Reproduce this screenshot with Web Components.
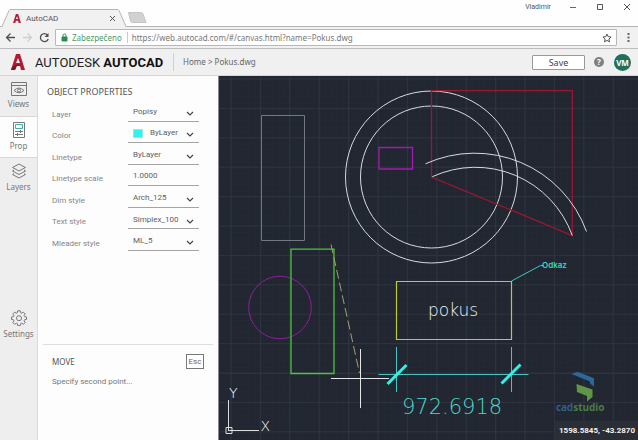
<!DOCTYPE html>
<html lang="en">
<head>
<meta charset="utf-8">
<title>AutoCAD</title>
<style>
html, body { margin: 0; height: 100%; }
body { font-family: "Roboto", "Noto Sans", sans-serif; font-size: 8px; color: #666; background: #fdfdfd; }
</style>
</head>
<body>
<cad-app></cad-app>

<script>
const define = (name, html, setup) => {
  const template = document.createElement('template');
  template.innerHTML = html;
  customElements.define(name, class extends HTMLElement {
    constructor() {
      super();
      this.attachShadow({ mode: 'open' }).append(template.content.cloneNode(true));
    }
    connectedCallback() { if (setup) setup(this, this.shadowRoot); }
  });
};

define('browser-tabs', `
<style>
:host { display: flex; align-items: flex-end; height: 26px; background: #fefefe; border-bottom: 1px solid #b4b4b4; }
button { font: inherit; border: 0; padding: 0; background: none; color: inherit; display: grid; place-items: center; }
svg { display: block; fill: none; }
.tab { display: flex; height: 18px; margin: 0 0 -1px 2px; flex: none; }
.body { box-sizing: border-box; width: 108px; border-top: 1px solid #b4b4b4; background: #f1f1f1; display: flex; align-items: center; gap: 5px; padding: 0 1px 0 3px; font-size: 8px; color: #555; }
.body span { flex: 1; }
.new { margin: 0 0 3px 1px; }
.window { margin: 0 6px 5px auto; display: flex; align-items: center; align-self: flex-start; height: 14px; }
.window span { font-size: 7px; color: #555; margin-right: 17px; }
.window button { width: 10px; height: 10px; margin-left: 17px; }
.window button:first-of-type { margin-left: 0; }
</style>
<div class="tab">
  <svg width="8" height="18"><path d="M0 18 7 1.500Q7.500.5 8 .5V18z" fill="#f1f1f1"/><path d="M0 17.500 7 1.500 8 .5" stroke="#b4b4b4"/></svg>
  <div class="body">
    <svg width="8" height="9" viewBox="0 0 14 16"><path d="M0 16 5 0h4l5 16h-4l-1-4H5l-1 4z" fill="#b01c34"/><path d="m5 9 2-5 2 5z" fill="#f1f1f1"/></svg>
    <span>AutoCAD</span>
    <button aria-label="Close tab"><svg width="9" height="9"><path d="m2 2 5 5m0-5L2 7" stroke="#555"/></svg></button>
  </div>
  <svg width="8" height="18"><path d="M8 18 1 1.500Q.5.5 0 .5V18z" fill="#f1f1f1"/><path d="M8 17.500 1 1.500 0 .5" stroke="#b4b4b4"/></svg>
</div>
<button class="new" aria-label="New tab"><svg width="20" height="11"><path d="M1.500.5h12q2 0 2.500 1.500l3 8.500H6q-2 0-2.500-1.500z" fill="#d2d2d2" stroke="#c4c4c4"/></svg></button>
<div class="window">
  <span>Vladimír</span>
  <button aria-label="Minimise"><svg width="8" height="8"><path d="M1 4.500h6" stroke="#666"/></svg></button>
  <button aria-label="Maximise"><svg width="8" height="8"><path d="M1.500 1.500h5v5h-5z" stroke="#555"/></svg></button>
  <button aria-label="Close"><svg width="8" height="8"><path d="m1 1 6 6m0-6L1 7" stroke="#555"/></svg></button>
</div>`);

define('browser-toolbar', `
<style>
:host { display: flex; align-items: center; box-sizing: border-box; height: 22px; padding: 0 4px 0 4px; background: #f1f1f1; border-bottom: 1px solid #bdbdbd; }
button { border: 0; padding: 0; background: none; display: grid; place-items: center; width: 12px; height: 14px; margin-right: 5px; }
svg { display: block; fill: none; }
.box { flex: 1; display: flex; align-items: center; box-sizing: border-box; height: 17px; background: #fff; border: 1px solid #b8b8b8; border-radius: 1px; padding: 0 3px 0 5px; font-family: "Noto Sans", sans-serif; font-size: 8px; min-width: 0; }
.secure { color: #4c9a68; margin: 0 5px 0 4px; }
input { flex: 1; min-width: 0; font: inherit; color: #777; border: 0; border-left: 1px solid #ccc; outline: 0; padding: 0 0 0 4px; height: 11px; background: none; }
.box button { margin: 0; }
.dots { margin: 0 0 0 5px; }
</style>
<button aria-label="Back"><svg width="11" height="11"><path d="M10 5.500H1.500M5.500 1.500l-4 4 4 4" stroke="#505050" stroke-width="1.300"/></svg></button>
<button aria-label="Forward"><svg width="11" height="11"><path d="M1 5.500h8.500M5.500 1.500l4 4-4 4" stroke="#cfcfcf" stroke-width="1.300"/></svg></button>
<button aria-label="Reload"><svg width="11" height="11"><path d="M8.500 3A4 4 0 1 0 9.200 7" stroke="#505050" stroke-width="1.300"/><path d="M9.500 1v4h-4z" fill="#505050"/></svg></button>
<div class="box">
  <svg width="7" height="9"><path d="M1 4h5v4H1z" fill="#2d8a4e" stroke="#2d8a4e"/><path d="M2 4V2.500a1.500 1.500 0 0 1 3 0V4" stroke="#2d8a4e"/></svg>
  <span class="secure">Zabezpečeno</span>
  <input aria-label="Address" value="https://web.autocad.com/#/canvas.html?name=Pokus.dwg">
  <button aria-label="Bookmark"><svg width="10" height="10"><path d="m5 1 1.200 2.700 2.900.3-2.200 2 .6 2.900L5 7.400 2.500 8.900l.6-2.900L.9 4l2.900-.3z" stroke="#555"/></svg></button>
</div>
<button class="dots" aria-label="Menu"><svg width="3" height="11"><path d="M.5 1h2v2h-2zm0 3.500h2v2h-2zm0 3.500h2v2h-2z" fill="#666"/></svg></button>`);

define('app-header', `
<style>
:host { display: flex; align-items: center; box-sizing: border-box; height: 27px; padding: 0 7px 0 11px; background: #f0f0f0; border-bottom: 1px solid #d4d4d4; font-family: "Noto Sans", sans-serif; }
svg { display: block; }
.brand { margin-left: 10px; font: 13px "Roboto", sans-serif; color: #222; white-space: nowrap; }
.brand b { font-weight: 700; color: #111; }
nav { margin-left: 10px; border-left: 1px solid #d0d0d0; padding: 2px 0 2px 9px; font-size: 8px; line-height: 14px; color: #666; white-space: nowrap; }
a { color: inherit; text-decoration: none; }
button { font: inherit; padding: 0; cursor: pointer; }
.save { margin-left: auto; width: 53px; height: 15px; font-size: 9px; line-height: 13px; color: #444; background: #fff; border: 1px solid #999; border-radius: 1px; }
.help, .user { border: 0; border-radius: 50%; color: #fff; font-weight: 700; display: grid; place-items: center; }
.help { width: 10px; height: 10px; background: #808080; font-size: 8px; line-height: 10px; margin: 0 10px 0 9px; }
.user { width: 17px; height: 17px; background: #21705b; font-size: 8px; }
</style>
<svg width="14" height="16" viewBox="0 0 14 16"><path d="M0 16 5 0h4l5 16h-4l-1-4H5l-1 4z" fill="#b51a35"/><path d="m5 9 2-5 2 5z" fill="#f0f0f0"/><path d="M0 16l1-3 6-3 3 2H6l-2 4z" fill="#7e1428"/></svg>
<div class="brand">AUTODESK <b>AUTOCAD</b></div>
<nav><a href="#home">Home</a> &gt; <a href="#file">Pokus.dwg</a></nav>
<button class="save">Save</button>
<button class="help" aria-label="Help">?</button>
<button class="user">VM</button>`);

define('nav-item', `
<style>
:host { display: block; box-sizing: border-box; height: 41px; border-bottom: 1px solid transparent; }
:host([line]) { border-color: #d8d8d8; }
:host([active]) { background: #fdfdfd; border-color: #d8d8d8; }
button { width: 100%; height: 100%; border: 0; padding: 0; background: none; font: inherit; line-height: 12px; color: #777; display: flex; flex-direction: column; align-items: center; justify-content: center; gap: 2px; }
::slotted(svg) { display: block; fill: none; stroke: #777; }
</style>
<button><slot name="icon"></slot><slot></slot></button>`);

define('side-nav', `
<style>
:host { display: flex; flex-direction: column; box-sizing: border-box; width: 38px; background: #eee; border-right: 1px solid #dcdcdc; font-family: "Noto Sans", sans-serif; }
.last { margin: auto 0 94px; }
</style>
<nav-item line><svg slot="icon" width="16" height="14"><path d="M.5.5h15v13H.5zM.5 3.500h15"/><path d="M3 8.500q5-5 10 0-5 4.500-10 0z"/><circle cx="8" cy="8.500" r="1.500"/></svg>Views</nav-item>
<nav-item active><svg slot="icon" width="12" height="16"><path d="M.5.5h11v15H.5z"/><path d="M2.500 2.500h7v4h-7z" stroke="#4aa"/><path d="M2 9.500h8M2 12.500h8M7.500 8v3M4.500 11v3"/></svg>Prop</nav-item>
<nav-item><svg slot="icon" width="16" height="16"><path d="m8 1 6.500 3.500L8 8 1.500 4.500zM3 7 1.500 8 8 11.500 14.500 8 13 7M3 10.500l-1.500 1L8 15l6.500-3.500-1.500-1"/></svg>Layers</nav-item>
<nav-item class="last"><svg slot="icon" width="16" height="16"><path d="M6.700.8h2.600l.4 2 1 .4 1.700-1.100 1.800 1.800-1.200 1.700.5 1 2 .4v2.400l-2 .4-.5 1 1.200 1.700-1.800 1.800-1.700-1.100-1 .4-.4 2H6.700l-.4-2-1-.4-1.700 1.100-1.800-1.800L3 10.800l-.5-1-2-.4V7l2-.4.5-1-1.200-1.700 1.800-1.800 1.700 1.100 1-.4z"/><circle cx="8" cy="8.200" r="2.500"/></svg>Settings</nav-item>`);

define('prop-row', `
<style>
:host { display: grid; grid-template-columns: minmax(0, 1fr) 71px; min-height: 0; }
label { align-self: end; padding-bottom: 1px; line-height: 12px; color: #858585; white-space: nowrap; }
.field { display: flex; align-items: center; border-bottom: 1px solid #a4a4a4; padding: 3px 5px 0 5px; min-width: 0; }
i { display: none; width: 10px; height: 9px; background: #35f0f0; margin-right: 7px; outline: 1px solid #9be5e5; outline-offset: -1px; }
:host([swatch]) i { display: block; }
select, input { appearance: none; flex: 1; width: 0; min-width: 0; border: 0; padding: 0; margin: 0; outline: 0; background: none; font: inherit; line-height: 14px; height: 14px; color: #606060; overflow: visible; }
svg { display: block; fill: none; flex: none; margin-top: 4px; }
</style>
<label for="f"></label>
<div class="field"><i></i></div>`, (host, root) => {
  const label = host.getAttribute('label'), value = host.getAttribute('value');
  root.querySelector('label').textContent = label;
  const field = root.querySelector('.field');
  if (host.hasAttribute('text')) {
    field.insertAdjacentHTML('beforeend', `<input id="f" value="${value}">`);
  } else {
    field.insertAdjacentHTML('beforeend', `<select id="f"><option>${value}</option></select><svg width="8" height="6"><path d="m1 1 3 3 3-3" stroke="#444" stroke-width="1.200"/></svg>`);
  }
});

define('command-box', `
<style>
:host { display: block; box-sizing: border-box; height: 96px; margin: 0 5px; border-top: 1px solid #ddd; padding: 9px 9px 0 9px; }
div { display: flex; justify-content: space-between; align-items: center; }
h2 { margin: 0; font-size: 8px; font-weight: 400; color: #555; font-family: "Noto Sans", sans-serif; }
button { font: inherit; font-size: 8px; line-height: 12px; width: 18px; height: 15px; padding: 0; color: #666; background: #fff; border: 1px solid #777; }
p { margin: 7px 0 0; line-height: 12px; color: #777; }
</style>
<div><h2><slot name="name"></slot></h2><button>Esc</button></div>
<p><slot></slot></p>`);

define('prop-panel', `
<style>
:host { display: flex; flex-direction: column; box-sizing: border-box; width: 181px; background: #fdfdfd; border-right: 1px solid #888; }
h1 { margin: 9px 0 0 9px; font-size: 9px; line-height: 14px; font-weight: 400; color: #555; font-family: "Noto Sans", sans-serif; }
.rows { display: grid; grid-auto-rows: 1fr; height: 151px; margin: 1px 19px 0 14px; }
command-box { margin-top: auto; }
</style>
<h1>OBJECT PROPERTIES</h1>
<div class="rows">
  <prop-row label="Layer" value="Popisy"></prop-row>
  <prop-row label="Color" value="ByLayer" swatch></prop-row>
  <prop-row label="Linetype" value="ByLayer"></prop-row>
  <prop-row label="Linetype scale" value="1.0000" text></prop-row>
  <prop-row label="Dim style" value="Arch_125"></prop-row>
  <prop-row label="Text style" value="Simplex_100"></prop-row>
  <prop-row label="Mleader style" value="ML_5"></prop-row>
</div>
<command-box><span slot="name">MOVE</span>Specify second point...</command-box>`);

define('drawing-canvas', `
<style>
:host { display: block; position: relative; overflow: hidden; background: #212631; min-width: 0; }
svg { display: block; position: absolute; inset: 0; width: 100%; height: 100%; fill: none; }
text { font-family: "DejaVu Sans", sans-serif; font-weight: 200; stroke: none; }
output { position: absolute; right: 0; bottom: 0; padding: 0 3px 0 4px; line-height: 19px; font-size: 8px; font-weight: 700; color: #f2f2f2; background: #2c2e36; white-space: nowrap; }
</style>
<svg viewBox="219 76 419 364" preserveAspectRatio="xMidYMid slice">
  <defs>
    <pattern id="minor" x="231" y="79" width="5.880" height="5.880" patternUnits="userSpaceOnUse"><path d="M0 .5h5.880M.5 0v5.880" stroke="#252a35" stroke-width=".6"/></pattern>
    <pattern id="major" x="230.500" y="78.500" width="29.400" height="29.400" patternUnits="userSpaceOnUse"><path d="M0 .5h29.400M.5 0v29.400" stroke="#2e343f"/></pattern>
  </defs>
  <path d="M219 76h419v364H219z" fill="url(#minor)"/>
  <path d="M219 76h419v364H219z" fill="url(#major)"/>
  <path d="M219 373.500h419" stroke="#4d2430"/>
  <path d="M261.500 115.500h43v125h-43z" stroke="#74777f"/>
  <g stroke="#d8dade"><circle cx="431.500" cy="177" r="86"/><circle cx="431.500" cy="177" r="71"/></g>
  <path d="M431.500 90.700H572.300V235.500L431.500 177z" stroke="#9c1730" stroke-width="1.300"/>
  <path d="M425.500 163.800A119 119 0 0 1 586.500 231.500M432.300 176.700A103 103 0 0 1 572.300 235.500" stroke="#d8dade"/>
  <path d="M379 147.500h33.500V169H379z" stroke="#a31bac" stroke-width="1.300"/>
  <circle cx="280" cy="307.500" r="31.300" stroke="#8d1f98"/>
  <path d="M291 249.200h43v124.300h-43z" stroke="#4cc43e" stroke-width="1.300"/>
  <path d="M331 244.500 359.500 373" stroke="#a99f6c" stroke-dasharray="9 4"/>
  <path d="M396.500 281.500h115v58h-115z" stroke="#bcc838" stroke-width="1.200"/>
  <text x="428" y="316" font-size="17" fill="#f0f1f4">pokus</text>
  <path d="m511.500 281 29-15.500h3" stroke="#3fc9bb"/>
  <text x="542" y="268" font-size="8" fill="#3fd6c6" style="font-family:Inter,sans-serif;font-weight:600">Odkaz</text>
  <path d="M378.500 374.500h150M396.500 347v45M511.500 347v45" stroke="#4cc3c1"/>
  <path d="m387.500 384 19-19M501.500 383.500l19-19" stroke="#33efe6" stroke-width="3"/>
  <text x="402" y="414" font-size="21" fill="#4fd8c8">972.6918</text>
  <path d="M360.500 349v59M331 378.500h58" stroke="#e4e5e8"/>
  <path d="M226 427.500h6v6h-6zM228.500 400v31M228 430.500h31" stroke="#dcdde0"/>
  <text x="229" y="398" font-size="14" fill="#fff">Y</text>
  <text x="260.500" y="430.500" font-size="14" fill="#fff">X</text>
  <path d="m571.500 374 6-2.200 16.500 6.400v8.600l-4-3.600v-1.700z" fill="#2b689b"/>
  <path d="m576.500 384 16 5.500v7.500l-5.500 4.500V396l-10-4z" fill="#5f9546"/>
  <text x="556" y="411" font-size="10" style="font-family:'Noto Sans',sans-serif;font-weight:600" fill="#306491">cad<tspan fill="#4c7b45" style="font-weight:700">studio</tspan></text>
</svg>
<output>1598.5845, -43.2870</output>`);

define('cad-app', `
<style>
:host { display: flex; flex-direction: column; min-height: 100vh; }
main { flex: 1; display: grid; grid-template-columns: auto auto minmax(0, 1fr); }
</style>
<browser-tabs></browser-tabs>
<browser-toolbar></browser-toolbar>
<app-header></app-header>
<main><side-nav></side-nav><prop-panel></prop-panel><drawing-canvas></drawing-canvas></main>`);
</script>
</body>
</html>
